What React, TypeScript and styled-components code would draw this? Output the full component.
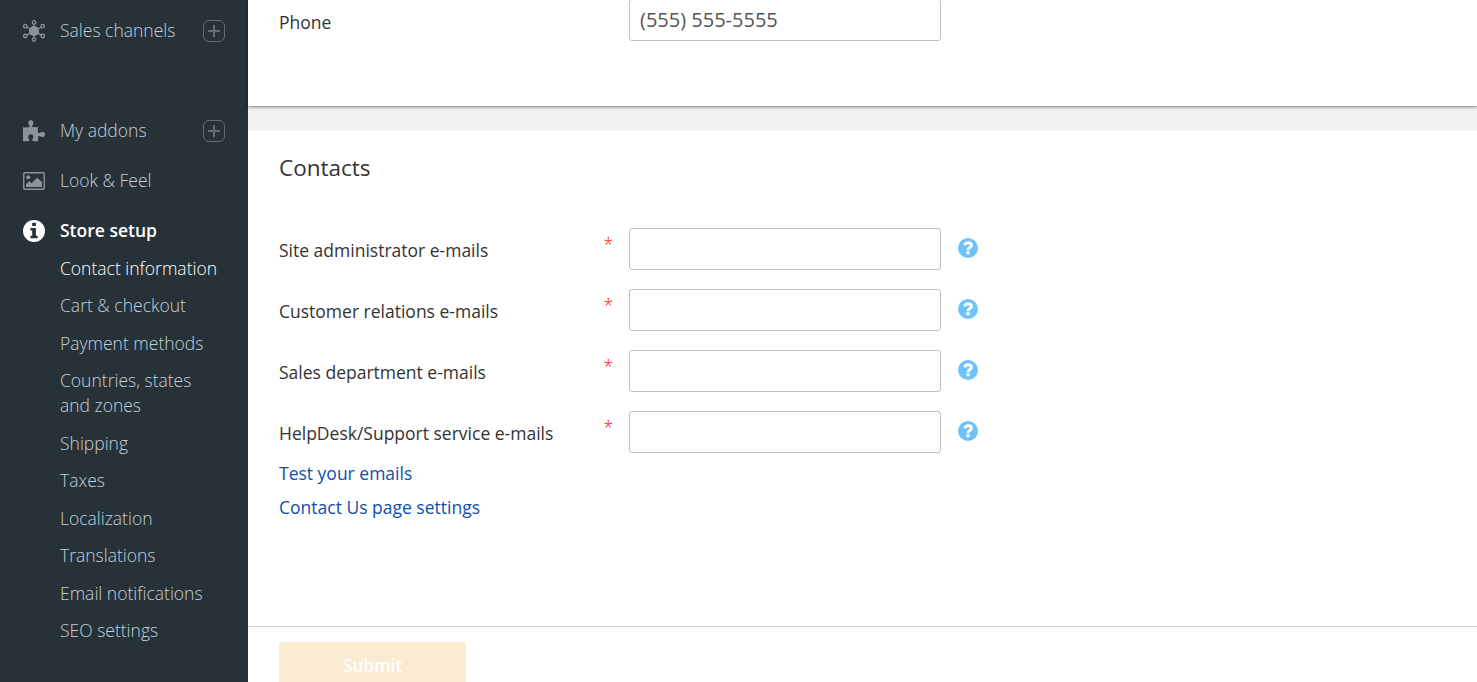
import React from 'react';
import styled, { createGlobalStyle, css } from 'styled-components';

const GlobalStyle = createGlobalStyle`
  * { box-sizing: border-box; }
  body { margin: 0; overflow: hidden; background: #fff; }
  body, input, button { font-family: 'Open Sans', sans-serif; font-size: 17.5px; }
`;

const Page = styled.div`
  display: flex;
  width: 100%;
  height: 682px;
  overflow: hidden;
  line-height: 25px;
`;

const Sidebar = styled.nav`
  flex: 0 0 248px;
  background: #263238;
  padding-top: 6px;
`;

const MenuRow = styled.div<{ $active?: boolean; $gapAfter?: boolean }>`
  display: flex;
  align-items: center;
  height: 50px;
  padding: 0 23px;
  color: ${p => (p.$active ? '#fff' : '#c3cfdd')};
  font-weight: ${p => (p.$active ? 600 : 300)};
  margin-bottom: ${p => (p.$gapAfter ? 50 : 0)}px;
  svg { display: block; flex: none; }
`;

const MenuIcon = styled.span<{ $active?: boolean }>`
  width: 22px;
  margin-right: 15px;
  color: ${p => (p.$active ? '#fff' : '#8a939e')};
`;

const MenuLabel = styled.span`
  flex: 1;
  white-space: nowrap;
  padding-bottom: 2px;
`;

const SubMenu = styled.ul`
  list-style: none;
  margin: -6.35px 0 0;
  padding: 0 0 0 60px;
`;

const SubItem = styled.li<{ $active?: boolean }>`
  padding: 6.25px 0;
  width: 160px;
  font-weight: 300;
  color: ${p => (p.$active ? '#fff' : '#c3cfdd')};
`;

const Content = styled.main`
  flex: 1;
  display: flex;
  flex-direction: column;
  background: #f2f2f2;
  color: #333;
`;

const panel = css`
  background: #fff;
  padding: 0 31px;
`;

const PhonePanel = styled.section`
  ${panel}
  height: 106px;
  box-shadow: 0 1px 3px rgba(0, 0, 0, 0.5);
  margin-bottom: 25px;
`;

const ContactsPanel = styled.section`
  ${panel}
  flex: 1;
`;

const Heading = styled.h2`
  margin: 0;
  padding: 21px 0 44px;
  font-size: 22.5px;
  line-height: 32px;
  font-weight: 400;
`;

const Field = styled.div<{ $clipped?: boolean }>`
  display: grid;
  grid-template-columns: 324.5px 25.5px 312px 1fr;
  height: 42px;
  margin-bottom: 19px;
  margin-top: ${p => (p.$clipped ? -1 : 0)}px;
`;

const Label = styled.label<{ $offset?: number }>`
  padding-top: ${p => p.$offset ?? 10}px;
  white-space: nowrap;
`;

const Required = styled.span`
  color: #ff0000;
  font-weight: 300;
  padding-top: 4px;
`;

const Input = styled.input`
  width: 312px;
  height: 42px;
  border: 1px solid #c1c1c1;
  border-radius: 3px;
  background: #fff;
  padding: 0 10px 1px;
  color: #555;
  font-size: 20px;
  outline: none;
`;

const Help = styled.span`
  padding: 10px 0 0 17px;
  svg { display: block; }
`;

const Links = styled.div`
  display: flex;
  flex-direction: column;
  align-items: flex-start;
  gap: 9px;
  margin-top: -11px;
`;

const TextLink = styled.a`
  color: #0f4fa8;
  text-decoration: none;
`;

const Footer = styled.footer`
  ${panel}
  height: 56px;
  border-top: 1px solid #d6d6d6;
  padding-top: 15px;
  overflow: hidden;
`;

const Submit = styled.button`
  display: block;
  width: 187px;
  height: 48px;
  padding: 0 0 2px;
  border: 0;
  border-radius: 3px;
  background: #fcebd3;
  color: #fff;
  font-weight: 600;
  letter-spacing: -0.2px;
`;

const PlusBox = () => (
  <svg width="22" height="22" viewBox="0 0 22 22" fill="none" stroke="#626c71">
    <rect x="0.5" y="0.5" width="21" height="21" rx="5.5" />
    <path d="M5 11H17M11 5V17" strokeWidth="2" />
  </svg>
);

const satellites = [[11, 2.4], [19.7, 6.2], [19.7, 16], [11, 19.6], [2.3, 16], [2.3, 6.2]];

const ChannelsIcon = () => (
  <svg width="22" height="22" viewBox="0 0 22 22" fill="none" stroke="currentColor" strokeWidth="1.3">
    <circle cx="11" cy="11" r="5.1" fill="currentColor" stroke="none" />
    <path d="M11 4V18M4 7.2L18 14.9M4 14.9L18 7.2" />
    {satellites.map(([x, y], i) => <circle key={i} cx={x} cy={y} r="1.75" fill="#263238" />)}
  </svg>
);

const PuzzleIcon = () => (
  <svg width="22" height="22" viewBox="0 0 22 22" fill="currentColor">
    <path d="M0 7.2C2 7.6 4.8 7.8 6.3 7.1C7.2 6.6 6.6 5.7 5.9 4.8C4.4 2.7 5.6 0.3 7.8 0.3C10 0.3 11.1 2.7 9.8 4.8C9.1 5.8 8.8 6.7 9.8 7.1C11.2 7.6 13.6 7.3 15.3 7C14.9 9 14.6 11.1 15.1 12.4C15.5 13.5 16.5 13.1 17.5 12.4C19.6 11 22 12.2 22 14.4C22 16.7 19.6 17.8 17.5 16.6C16.4 15.9 15.5 15.8 15.1 17C14.8 18.2 15 19.6 15.3 21C13.5 21.3 11.7 21.4 10.1 21.1C9.1 20.9 9.1 19.7 9.8 18.7C11 17 10.2 14.3 7.8 14.3C5.5 14.3 4.5 16.9 5.8 18.7C6.7 19.9 6.6 20.8 5.5 21.1C3.8 21.5 1.7 21.4 0 21Z" />
  </svg>
);

const PictureIcon = () => (
  <svg width="22" height="18" viewBox="0 0 22 18" fill="currentColor">
    <rect x="0.75" y="0.75" width="20.5" height="16.5" rx="1" fill="none" stroke="currentColor" strokeWidth="1.4" />
    <circle cx="5.3" cy="5.3" r="2" />
    <path d="M3 15V12.2L6.2 9L8.5 11.2L14.2 5.5L19 10.2V15Z" />
  </svg>
);

const InfoIcon = () => (
  <svg width="22" height="22" viewBox="0 0 22 22">
    <circle cx="11" cy="11" r="11" fill="currentColor" />
    <path d="M9.2 2.8H12.9V6H9.2ZM7.4 8H12.9V15.8H14.7V18.3H7.4V15.8H9.2V10.5H7.4Z" fill="#263238" />
  </svg>
);

const HelpIcon = () => (
  <svg width="20" height="20" viewBox="0 0 20 20">
    <circle cx="10" cy="10" r="10" fill="#6ec2fc" />
    <path d="M6.6 7.2C7.3 5.4 8.5 4.7 10 4.7C11.9 4.7 13.4 5.8 13.4 7.4C13.4 9.6 10 9.4 10 12.2" fill="none" stroke="#fff" strokeWidth="2.9" />
    <path d="M8.4 13.3H11.6V16.3H8.4Z" fill="#fff" />
  </svg>
);

const subItems = [
  'Contact information', 'Cart & checkout', 'Payment methods', 'Countries, states and zones',
  'Shipping', 'Taxes', 'Localization', 'Translations', 'Email notifications', 'SEO settings',
];

const emailFields = [
  'Site administrator e-mails', 'Customer relations e-mails',
  'Sales department e-mails', 'HelpDesk/Support service e-mails',
];

export default function App() {
  return (
    <Page>
      <GlobalStyle />
      <Sidebar>
        <MenuRow $gapAfter><MenuIcon><ChannelsIcon /></MenuIcon><MenuLabel>Sales channels</MenuLabel><PlusBox /></MenuRow>
        <MenuRow><MenuIcon><PuzzleIcon /></MenuIcon><MenuLabel>My addons</MenuLabel><PlusBox /></MenuRow>
        <MenuRow><MenuIcon><PictureIcon /></MenuIcon><MenuLabel>Look &amp; Feel</MenuLabel></MenuRow>
        <MenuRow $active><MenuIcon $active><InfoIcon /></MenuIcon><MenuLabel>Store setup</MenuLabel></MenuRow>
        <SubMenu>
          {subItems.map((item, i) => <SubItem key={item} $active={i === 0}>{item}</SubItem>)}
        </SubMenu>
      </Sidebar>
      <Content>
        <PhonePanel>
          <Field $clipped><Label htmlFor="phone" $offset={11}>Phone</Label><span /><Input id="phone" defaultValue="(555) 555-5555" /></Field>
        </PhonePanel>
        <ContactsPanel>
          <Heading>Contacts</Heading>
          {emailFields.map((name, i) => (
            <Field key={name}>
              <Label htmlFor={`email-${i}`}>{name}</Label>
              <Required>*</Required>
              <Input id={`email-${i}`} />
              <Help><HelpIcon /></Help>
            </Field>
          ))}
          <Links>
            <TextLink>Test your emails</TextLink>
            <TextLink>Contact Us page settings</TextLink>
          </Links>
        </ContactsPanel>
        <Footer><Submit>Submit</Submit></Footer>
      </Content>
    </Page>
  );
}
